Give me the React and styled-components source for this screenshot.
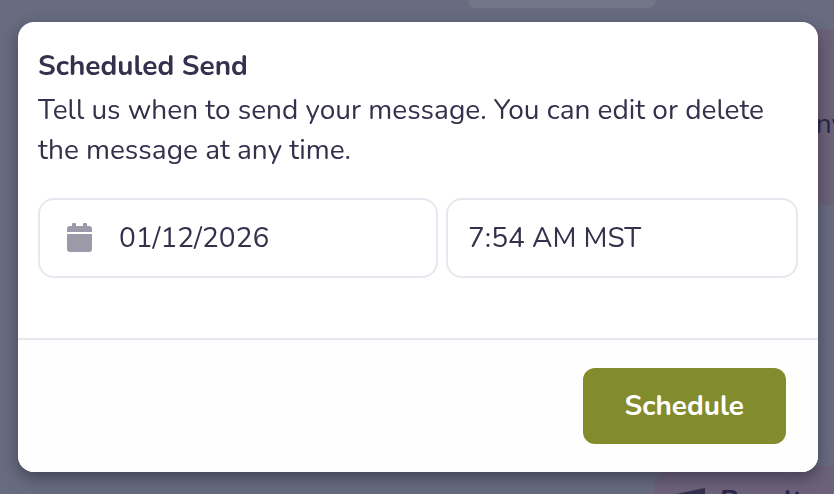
import React, { useState } from 'react';
import styled, { createGlobalStyle } from 'styled-components';

const GlobalStyle = createGlobalStyle`
    * {
        box-sizing: border-box;
    }
    body {
        margin: 0;
        color: #33314b;
        font-family: Nunito, Lato, sans-serif;
        font-size: 28px;
        line-height: 40px;
    }
`;

export default function App() {
    const [date, setDate] = useState('01/12/2026');
    const [time, setTime] = useState('7:54 AM MST');

    return (
        <>
            <GlobalStyle />
            <Thread aria-hidden="true">
                <DayPill />
                <Message>any</Message>
                <Attachment>
                    <MusicIcon />
                    <strong>Result</strong>
                </Attachment>
            </Thread>
            <Overlay>
                <Dialog role="dialog" aria-labelledby="schedule-title">
                    <Body>
                        <Title id="schedule-title">Scheduled Send</Title>
                        <Desc>
                            Tell us when to send your message. You can edit or delete the message at any time.
                        </Desc>
                        <Fields>
                            <Field>
                                <CalendarIcon />
                                <Input
                                    aria-label="Date"
                                    value={date}
                                    onChange={(e) => setDate(e.target.value)}
                                />
                            </Field>
                            <Field>
                                <Input
                                    aria-label="Time"
                                    value={time}
                                    onChange={(e) => setTime(e.target.value)}
                                />
                            </Field>
                        </Fields>
                    </Body>
                    <Footer>
                        <Button type="button">Schedule</Button>
                    </Footer>
                </Dialog>
            </Overlay>
        </>
    );
}

const CalendarIcon = () => (
    <Icon width="26" height="30" viewBox="0 0 26 30" fill="#9b9aa8" aria-hidden="true">
        <path d="M0 9V6a3 3 0 0 1 3-3h2V1a1 1 0 0 1 1-1h2a1 1 0 0 1 1 1v2h7V1a1 1 0 0 1 1-1h2a1 1 0 0 1 1 1v2h2a3 3 0 0 1 3 3v3z" />
        <path d="M0 11h25v15a3 3 0 0 1-3 3H3a3 3 0 0 1-3-3z" />
    </Icon>
);

const MusicIcon = () => (
    <Icon width="36" height="36" viewBox="0 0 36 36" fill="#33314f" aria-hidden="true">
        <path d="M4 9L33 3v25h-4V12L8 16v14H4z" />
    </Icon>
);

const Icon = styled.svg`
    flex: none;
`;

const Thread = styled.div`
    display: flex;
    flex-direction: column;
    align-items: flex-end;
    height: 100vh;
    overflow: hidden;
    background: #686c81;
`;

const DayPill = styled.div`
    flex: none;
    width: 188px;
    height: 8px;
    margin-right: 178px;
    border-radius: 0 0 20px 20px;
    background: #727787;
`;

const Message = styled.div`
    flex: none;
    width: 80%;
    height: 176px;
    margin: 21px -12px 0 0;
    padding: 75px 0;
    background: #6d627a;
    color: #29274a;
    text-align: right;
`;

const Attachment = styled.div`
    display: flex;
    flex: none;
    gap: 12px;
    width: 180px;
    margin-top: 261px;
    padding: 15px 18px;
    border-radius: 24px 0 0 0;
    background: #6d627a;
    color: #29274a;

    ${Icon} {
        margin-top: 4px;
    }
`;

const Overlay = styled.div`
    position: fixed;
    inset: 0;
    padding: 22px 16px 22px 18px;
`;

const Dialog = styled.form`
    overflow: hidden;
    border-radius: 16px;
    background: #fff;
    box-shadow: 0 6px 16px rgba(30, 28, 40, 0.5);
`;

const Body = styled.div`
    padding: 24px 20px 60px;
`;

const Title = styled.h2`
    margin: 0 0 4px;
    font-size: 28px;
    font-weight: 700;
`;

const Desc = styled.p`
    margin: 0 0 28px;
`;

const Fields = styled.div`
    display: grid;
    grid-template-columns: 25fr 22fr;
    gap: 8px;
`;

const Field = styled.label`
    display: flex;
    align-items: center;
    gap: 26px;
    min-width: 0;
    height: 80px;
    padding: 0 20px;
    border: 2px solid #e8e7ef;
    border-radius: 16px;

    ${Icon} {
        margin-left: 7px;
    }
`;

const Input = styled.input`
    flex: 1;
    min-width: 0;
    padding: 0;
    border: 0;
    outline: 0;
    background: transparent;
    color: inherit;
    font: inherit;
`;

const Footer = styled.div`
    display: flex;
    justify-content: flex-end;
    padding: 28px 32px;
    border-top: 2px solid #e8e7ef;
    background: #fefefe;
`;

const Button = styled.button`
    padding: 18px 42px;
    border: 0;
    border-radius: 12px;
    background: #838c2d;
    color: #fff;
    font: inherit;
    font-weight: 700;
    cursor: pointer;
`;
